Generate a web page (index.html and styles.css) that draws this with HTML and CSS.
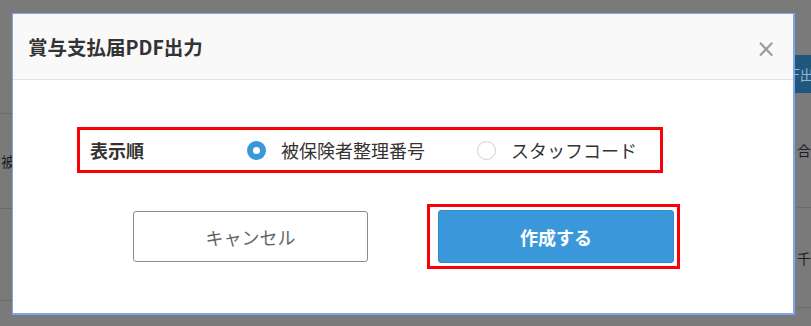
FILE: index.html
```html
<!DOCTYPE html>
<html lang="ja">
<head>
<meta charset="utf-8">
<link rel="stylesheet" href="styles.css">
</head>
<body>
<div class="screen">
  <div class="side side-left">
    <div class="cell c1"></div>
    <div class="cell c2"><span class="clip-r">被</span></div>
    <div class="cell c3"></div>
  </div>
  <div class="dialog">
    <div class="dialog-header">
      <h1 class="dialog-title">賞与支払届PDF出力</h1>
      <span class="close">×</span>
    </div>
    <div class="dialog-body">
      <div class="order-box">
        <span class="order-label">表示順</span>
        <label class="radio">
          <span class="radio-dot checked"></span>
          <span class="radio-text">被保険者整理番号</span>
        </label>
        <label class="radio radio-second">
          <span class="radio-dot"></span>
          <span class="radio-text">スタッフコード</span>
        </label>
      </div>
      <div class="actions">
        <button class="btn btn-cancel">キャンセル</button>
        <div class="highlight">
          <button class="btn btn-primary">作成する</button>
        </div>
      </div>
    </div>
  </div>
  <div class="side side-right">
    <div class="pdf-tab">F出</div>
    <div class="rcell r1">合</div>
    <div class="rcell r2">千</div>
  </div>
</div>
</body>
</html>
```
FILE: styles.css
```css
html, body {
  margin: 0;
  padding: 0;
}
body {
  width: 811px;
  height: 326px;
  background: #7a7a7a;
  font-family: "Noto Sans CJK JP", "Noto Sans", sans-serif;
  overflow: hidden;
}
.screen {
  display: flex;
  padding-top: 13px;
  border-top: 2px solid #8c8c8c;
  margin-top: -2px;
  height: 313px;
}
.side {
  flex: none;
  overflow: hidden;
  margin-top: -13px;
}
.side-left {
  width: 12px;
}
.cell {
  border-bottom: 1px solid #6c6c6c;
  box-sizing: border-box;
}
.c1 { height: 114px; }
.c2 {
  height: 95px;
  display: flex;
  align-items: center;
  justify-content: flex-end;
}
.c3 { height: 92px; }
.clip-r {
  font-size: 14px;
  color: #1e1e1e;
  margin-right: -3px;
}
.dialog {
  flex: none;
  width: 783px;
  height: 302px;
  box-sizing: border-box;
  background: #fff;
  border: 1px solid #7da6ea;
  border-right-width: 2px;
  border-bottom-width: 2px;
  display: flex;
  flex-direction: column;
}
.dialog-header {
  height: 66px;
  box-sizing: border-box;
  background: #f9f9f9;
  border-bottom: 1px solid #e3e3e3;
  display: flex;
  align-items: center;
  justify-content: space-between;
  padding: 0 17px 0 15px;
}
.dialog-title {
  margin: 0;
  font-size: 19.5px;
  font-weight: 700;
  color: #333;
}
.close {
  font-family: "DejaVu Sans", sans-serif;
  font-size: 24px;
  color: #9a9a9a;
  line-height: 1;
  margin-top: 5px;
}
.dialog-body {
  padding: 47px 0 0 64px;
}
.order-box {
  width: 586px;
  height: 46px;
  box-sizing: border-box;
  border: 3px solid #fb0007;
  display: flex;
  align-items: center;
  padding-left: 10px;
  color: #333;
  font-size: 18px;
}
.order-label {
  font-weight: 700;
  width: 157px;
}
.radio {
  display: flex;
  align-items: center;
}
.radio-second {
  margin-left: 52px;
}
.radio-dot {
  width: 19px;
  height: 19px;
  box-sizing: border-box;
  border-radius: 50%;
  border: 1px solid #cfcfcf;
  background: #fff;
  margin-right: 15px;
}
.radio-dot.checked {
  border: 6px solid #3a98d8;
}
.actions {
  display: flex;
  align-items: center;
  margin-top: 31px;
  padding-left: 56px;
}
.btn {
  font-family: inherit;
  font-size: 18px;
  border-radius: 3px;
  cursor: pointer;
}
.btn-cancel {
  width: 235px;
  height: 51px;
  background: #fff;
  border: 1px solid #8c8c8c;
  color: #666;
}
.highlight {
  margin-left: 59px;
  border: 3px solid #fb0007;
  padding: 3px 3px 3px 8px;
  display: flex;
}
.btn-primary {
  width: 236px;
  height: 53px;
  background: #3a98da;
  border: 1px solid #2f8ccd;
  color: #fff;
  font-weight: 700;
}
.side-right {
  width: 16px;
}
.pdf-tab {
  margin-top: 55px;
  height: 38px;
  background: #1f577f;
  color: #9fb3c4;
  font-size: 14px;
  line-height: 38px;
  white-space: nowrap;
  text-indent: -3px;
}
.rcell {
  font-size: 14px;
  color: #1e1e1e;
  white-space: nowrap;
  box-sizing: border-box;
  border-bottom: 1px solid #6c6c6c;
  display: flex;
  align-items: center;
}
.r1 {
  height: 115px;
  margin-left: 2px;
}
.r2 {
  height: 100px;
  margin-left: 2px;
}
```
